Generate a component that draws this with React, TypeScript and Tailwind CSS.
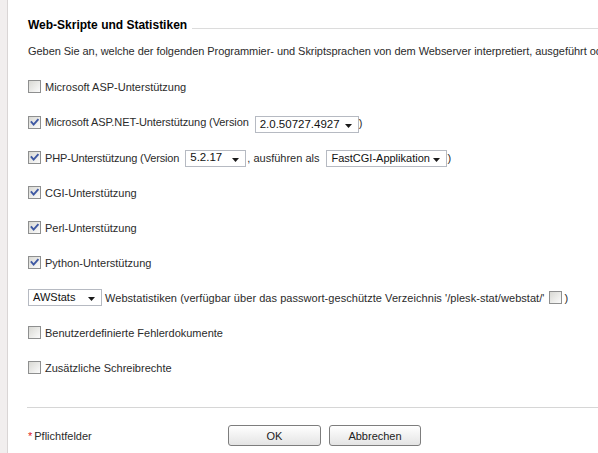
import React from "react";

const Checkbox = ({ checked = false }: { checked?: boolean }) => (
  <span className="relative inline-flex h-[13px] w-[13px] shrink-0 items-center justify-center border border-[#8e8f8f] bg-linear-to-br from-[#d9d9d4] to-[#fbfbfb]">
    {checked && (
      <svg width="11" height="11" viewBox="0 0 11 11" className="absolute left-0 top-0">
        <path
          d="M2.5 5.2 L4.6 7.6 L8.8 2.8"
          fill="none"
          stroke="#3e58a3"
          strokeWidth="1.9"
          strokeLinecap="square"
        />
      </svg>
    )}
  </span>
);

const Select = ({
  value,
  className,
  textClass = "text-[11px]",
}: {
  value: string;
  className: string;
  textClass?: string;
}) => (
  <span
    className={
      "inline-flex h-[17px] shrink-0 items-center justify-between border border-[#b6bac2] bg-white pl-[4px] pr-[6px] text-[#111] tracking-normal " +
      className
    }
  >
    <span className={textClass + " leading-none"}>{value}</span>
    <svg width="7" height="4" viewBox="0 0 7 4" className="mt-[3px]">
      <path d="M0 0 H7 L3.5 4 Z" fill="#1a1a1a" />
    </svg>
  </span>
);

const Row = ({
  children,
  h = "h-[35px]",
}: {
  children: React.ReactNode;
  h?: string;
}) => <div className={"flex items-center whitespace-nowrap " + h}>{children}</div>;

export default function App() {
  return (
    <div className="flex h-[453px] w-[598px] overflow-hidden bg-white font-['Liberation_Sans',Arial,sans-serif] text-[11px] leading-[16px] text-[#2b2b2b]">
      {/* linke Leiste */}
      <div className="w-[8px] shrink-0 border-r border-[#d9d5d5] bg-[#f1eeee]" />

      <div className="flex min-w-0 flex-1 flex-col overflow-hidden pl-[20px]">
        {/* Titel */}
        <div className="mt-[17px] flex h-[16px] items-start gap-[5px]">
          <h2 className="whitespace-nowrap text-[12px] font-bold leading-[16px] text-black">
            Web-Skripte und Statistiken
          </h2>
          <div className="mt-[11px] h-px flex-1 bg-[#dcdcdc]" />
        </div>

        <p className="mt-[10px] whitespace-nowrap tracking-[-0.05px]">
          Geben Sie an, welche der folgenden Programmier- und Skriptsprachen von dem Webserver interpretiert, ausgeführt oder unterstützt werden sollen.
        </p>

        <div className="mt-[10px] flex flex-col">
          <Row>
            <Checkbox />
            <span className="ml-[4px]">Microsoft ASP-Unterstützung</span>
          </Row>
          <Row h="h-[36px]">
            <Checkbox checked />
            <span className="ml-[4px] tracking-[-0.1px]">Microsoft ASP.NET-Unterstützung (Version</span>
            <Select value="2.0.50727.4927" className="ml-[6px] mt-[5px] w-[104px]" textClass="text-[11.5px]" />
            <span className="mt-[2px]">)</span>
          </Row>
          <Row>
            <Checkbox checked />
            <span className="ml-[4px] tracking-[-0.15px]">PHP-Unterstützung (Version</span>
            <Select value="5.2.17" className="ml-[6px] mt-[1px] w-[61px]" textClass="text-[11.5px]" />
            <span className="ml-[1px]">, ausführen als</span>
            <Select value="FastCGI-Applikation" className="ml-[7px] mt-[1px] w-[121px]" textClass="text-[11px]" />
            <span>)</span>
          </Row>
          <Row>
            <Checkbox checked />
            <span className="ml-[4px]">CGI-Unterstützung</span>
          </Row>
          <Row>
            <Checkbox checked />
            <span className="ml-[4px]">Perl-Unterstützung</span>
          </Row>
          <Row>
            <Checkbox checked />
            <span className="ml-[4px]">Python-Unterstützung</span>
          </Row>
          <Row>
            <Select value="AWStats" className="w-[74px]" />
            <span className="ml-[3px] tracking-[0.05px]">
              Webstatistiken (verfügbar über das passwort-geschützte Verzeichnis &apos;/plesk-stat/webstat/&apos;
            </span>
            <span className="ml-[5px] inline-flex">
              <Checkbox />
            </span>
            <span className="ml-[2px]">)</span>
          </Row>
          <Row>
            <Checkbox />
            <span className="ml-[4px]">Benutzerdefinierte Fehlerdokumente</span>
          </Row>
          <Row>
            <Checkbox />
            <span className="ml-[4px]">Zusätzliche Schreibrechte</span>
          </Row>
        </div>

        <div className="-ml-[1px] mt-[22px] h-px bg-[#d6d6d6]" />

        {/* Fußzeile */}
        <div className="mt-[17px] flex h-[21px] items-center">
          <div className="w-[200px] whitespace-nowrap">
            <span className="text-[#e0201b]">*</span>
            <span className="ml-[2px]">Pflichtfelder</span>
          </div>
          <button className="h-[21px] w-[93px] rounded-[3px] border border-[#7d7d7d] bg-linear-to-b from-white to-[#e4e4e4] text-[11px] text-[#222]">
            OK
          </button>
          <button className="ml-[8px] h-[21px] w-[92px] rounded-[3px] border border-[#7d7d7d] bg-linear-to-b from-white to-[#e4e4e4] text-[11px] text-[#222]">
            Abbrechen
          </button>
        </div>
      </div>
    </div>
  );
}
